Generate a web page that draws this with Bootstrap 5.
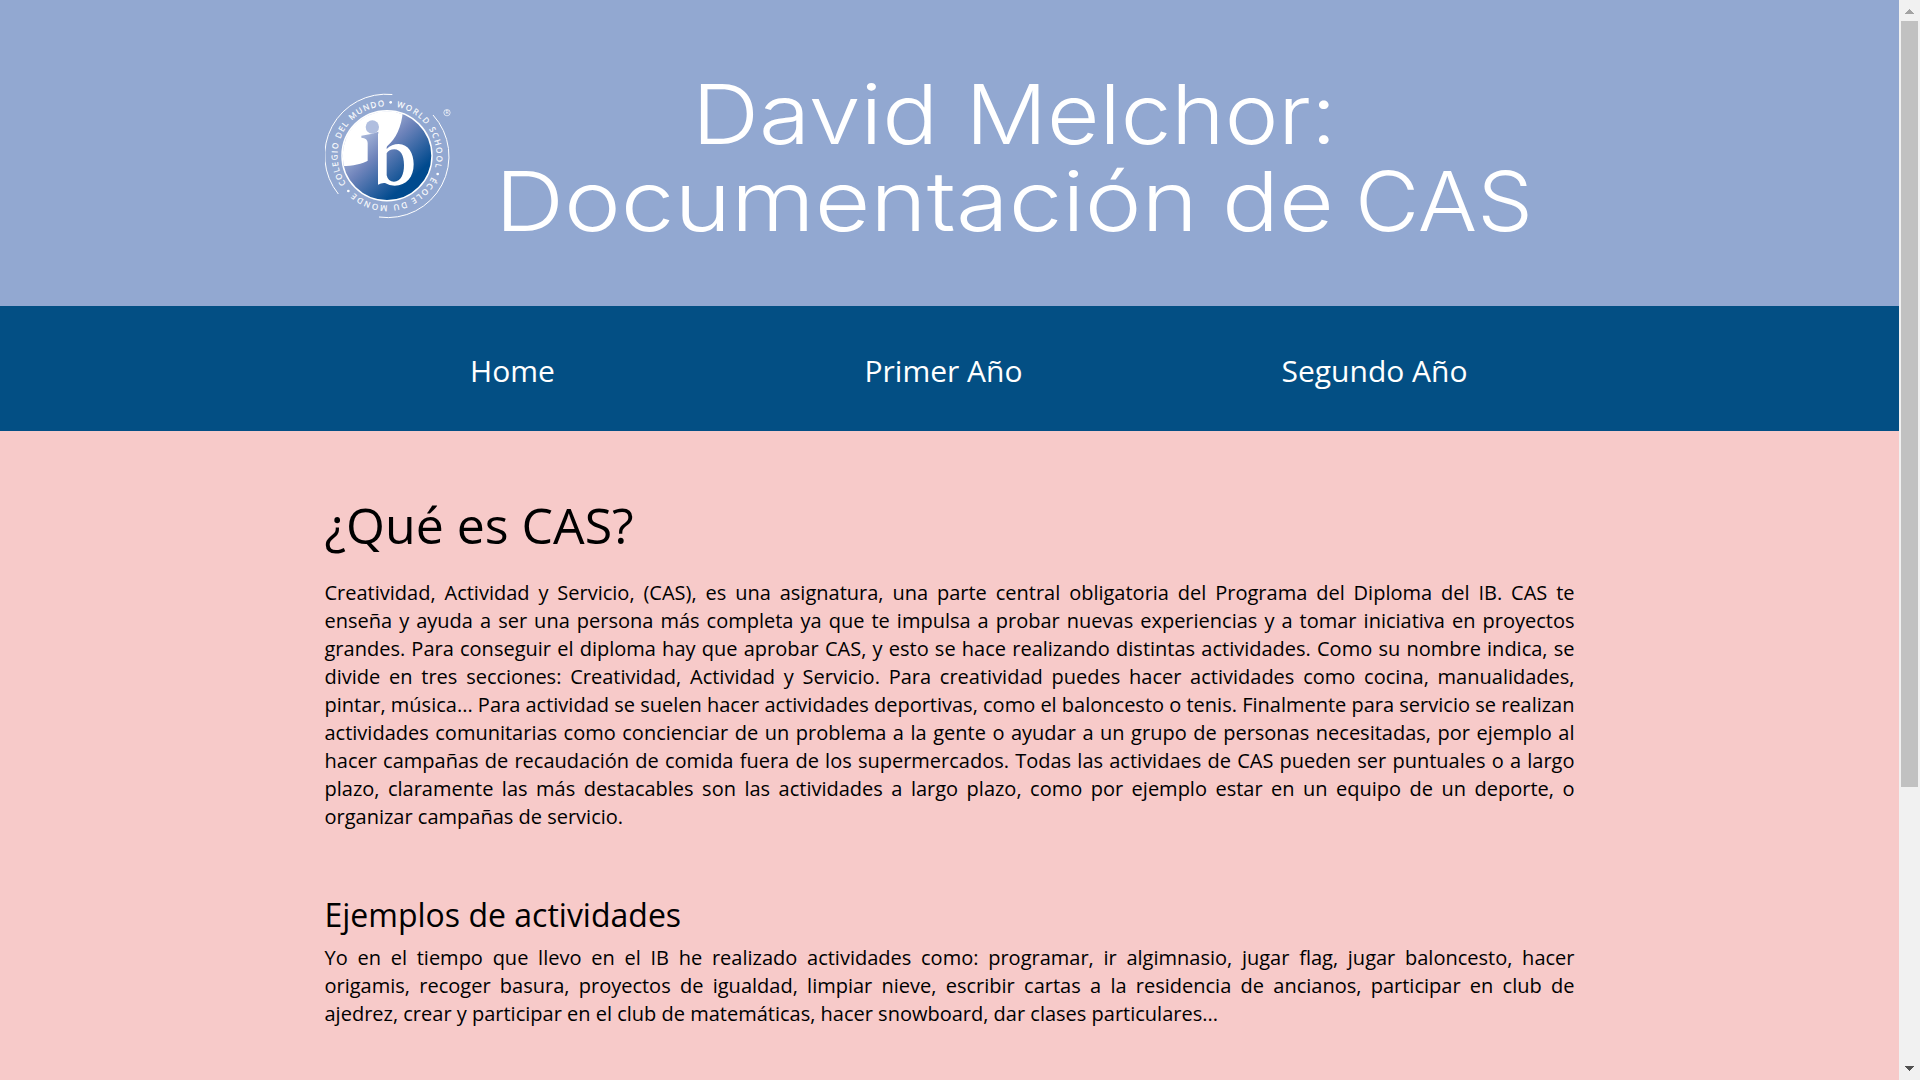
<!DOCTYPE html>
<html lang="es">
<head>
<meta charset="utf-8">
<meta name="viewport" content="width=device-width, initial-scale=1">
<title>David Melchor: Documentación de CAS</title>
<link href="https://cdn.jsdelivr.net/npm/bootstrap@5.3.0/dist/css/bootstrap.min.css" rel="stylesheet">
<style>
  body { font-family: "Open Sans", "Noto Sans", sans-serif; font-size: 20px; line-height: 28px; color: #000; background: #f7cac9; height: 1080px; }
  .page-wrap { width: 1250px; }
  .site-header { background: #92a8d1; height: 306px; }
  .ib-logo { width: 126px; height: 126px; margin-top: 6px; }
  .site-title { width: 1070px; height: 180px; margin-left: 29.5px; overflow: visible; }
  .site-title text { font-family: Inter, sans-serif; font-weight: 300; font-size: 83px; fill: #fff; }
  .site-nav { background: #034f84; height: 125px; padding-top: 4px; }
  .nav-row { width: 1293px; margin-left: 297px; }
  .nav-row a { font-size: 30px; line-height: 42px; color: #fff; }
  .about { padding-top: 59px; }
  .about h1 { font-size: 50px; line-height: 70px; margin-bottom: 19px; font-weight: 400; }
  .about h2 { font-size: 32px; line-height: 44px; margin: 62px 0 7px; font-weight: 400; }
  .about p { text-align: justify; }
  .full-line { text-align-last: justify; }
  .scroll-rail { width: 21px; background: #f1f1f1; }
  .scroll-thumb { width: 17px; height: 766px; background: #c1c1c1; }
</style>
<script src="https://cdn.jsdelivr.net/npm/bootstrap@5.3.0/dist/js/bootstrap.bundle.min.js"></script>
</head>
<body class="d-flex overflow-hidden">
<div class="flex-grow-1">
  <header class="site-header d-flex align-items-center">
    <div class="page-wrap mx-auto d-flex align-items-center">
      <svg class="ib-logo flex-shrink-0" viewBox="28 25 378 378" role="img" aria-label="IB World School">
        <defs>
          <linearGradient id="globe" gradientUnits="userSpaceOnUse" x1="135" y1="120" x2="285" y2="285">
            <stop offset="0" stop-color="#bcc8e4"/><stop offset=".45" stop-color="#6f84bb"/><stop offset="1" stop-color="#004a8e"/>
          </linearGradient>
          <clipPath id="disc"><circle cx="214" cy="213" r="133"/></clipPath>
          <path id="ring" d="M105 314.600A149 149 0 0 1 323 111.400A149 149 0 0 1 105 314.600"/>
        </defs>
        <g fill="none" stroke="#fff" stroke-width="3">
          <path d="M68 328A184 184 0 0 1 230 29.500"/>
          <path d="M352 91A184 184 0 0 1 190 397"/>
        </g>
        <circle cx="214" cy="213" r="135" fill="url(#globe)" stroke="#fff" stroke-width="4.500"/>
        <g clip-path="url(#disc)">
          <path d="M60 60H262C263 115 244 160 215 184C180 222 140 248 60 244Z" fill="#fff"/>
          <path d="M137 153Q165 150 188 141V250H156V175Q156 160 137 159Z" fill="url(#globe)"/>
          <circle cx="170" cy="127" r="20" fill="#b0bedf"/>
        </g>
        <path fill="#fff" fill-rule="evenodd" d="M187 147L213 142V193Q228 178 249 178C278 178 294 206 294 239C294 278 272 303 237 303Q221 303 208 295Q197 294 187 300ZM213 206V272Q217 291 235 291C256 291 265 269 265 241C265 213 255 194 236 194Q220 194 213 206Z"/>
        <g fill="#fff" stroke="#fff" stroke-width=".5" font-family="Open Sans, sans-serif" font-size="24">
          <text><textPath href="#ring" startOffset="22" textLength="316">COLEGIO DEL MUNDO</textPath></text>
          <text><textPath href="#ring" startOffset="374" textLength="241">WORLD SCHOOL</textPath></text>
          <text><textPath href="#ring" startOffset="646" textLength="275">ÉCOLE DU MONDE</textPath></text>
        </g>
        <g fill="#fff"><circle cx="225" cy="53" r="4"/><circle cx="366" cy="268" r="4"/><circle cx="98" cy="319" r="4"/></g>
        <circle cx="394" cy="84" r="9.500" fill="none" stroke="#fff" stroke-width="2"/>
        <text x="394" y="89.500" fill="#fff" font-family="Open Sans, sans-serif" font-size="15" text-anchor="middle">R</text>
      </svg>
      <h1 class="mb-0">
        <svg class="site-title d-block" viewBox="480 63 1070 180">
          <text x="692" y="144" textLength="246.500" lengthAdjust="spacingAndGlyphs">David</text>
          <text x="965.500" y="144" textLength="371" lengthAdjust="spacingAndGlyphs">Melchor:</text>
          <text x="495" y="231" textLength="703" lengthAdjust="spacingAndGlyphs">Documentación</text>
          <text x="1222" y="231" textLength="112" lengthAdjust="spacingAndGlyphs">de</text>
          <text x="1355" y="231" textLength="178" lengthAdjust="spacingAndGlyphs">CAS</text>
        </svg>
      </h1>
    </div>
  </header>
  <nav class="site-nav d-flex align-items-center">
    <div class="nav-row row g-0 text-center">
      <div class="col-4"><a class="text-decoration-none" href="#">Home</a></div>
      <div class="col-4"><a class="text-decoration-none" href="#">Primer Año</a></div>
      <div class="col-4"><a class="text-decoration-none" href="#">Segundo Año</a></div>
    </div>
  </nav>
  <main class="page-wrap mx-auto about">
    <h1>¿Qué es CAS?</h1>
    <p class="mb-0">Creatividad, Actividad y Servicio, (CAS), es una asignatura, una parte central obligatoria del Programa del Diploma del IB. CAS te enseña y ayuda a ser una persona más completa ya que te impulsa a probar nuevas experiencias y a tomar iniciativa en proyectos grandes. Para conseguir el diploma hay que aprobar CAS, y esto se hace realizando distintas actividades. Como su nombre indica, se divide en tres secciones: Creatividad, Actividad y Servicio. Para creatividad puedes hacer actividades como cocina, manualidades, pintar, música... Para actividad se suelen hacer actividades deportivas, como el baloncesto o tenis. Finalmente para servicio se realizan actividades comunitarias como concienciar de un problema a la gente o ayudar a un grupo de personas necesitadas, por ejemplo al hacer campañas de recaudación de comida fuera de los supermercados. Todas las actividaes de CAS pueden ser puntuales o a largo plazo, claramente las más destacables son las actividades a largo plazo, como por ejemplo estar en un equipo de un deporte, o organizar campañas de servicio.</p>
    <h2>Ejemplos de actividades</h2>
    <p class="mb-0"><span class="d-block full-line">Yo en el tiempo que llevo en el IB he realizado actividades como: programar, ir algimnasio, jugar flag, jugar baloncesto, hacer</span> origamis, recoger basura, proyectos de igualdad, limpiar nieve, escribir cartas a la residencia de ancianos, participar en club de ajedrez, crear y participar en el club de matemáticas, hacer snowboard, dar clases particulares...</p>
  </main>
</div>
<div class="scroll-rail flex-shrink-0 d-flex flex-column align-items-center">
  <svg width="21" height="21" shape-rendering="crispEdges"><path d="M6 14H15L10.500 9Z" fill="#a3a3a3"/></svg>
  <div class="scroll-thumb"></div>
  <svg class="mt-auto" width="21" height="21" shape-rendering="crispEdges"><path d="M6 7H15L10.500 12Z" fill="#505050"/></svg>
</div>
</body>
</html>
